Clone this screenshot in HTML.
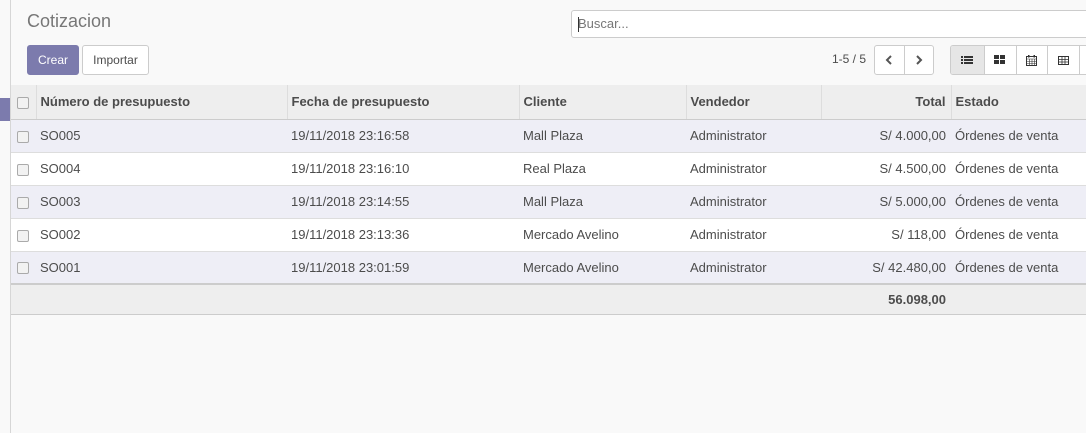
<!DOCTYPE html>
<html><head><style>
*{box-sizing:border-box;margin:0;padding:0}
body{width:1086px;height:433px;overflow:hidden;background:#f9f9f9;font-family:"Liberation Sans",sans-serif;font-size:13px;color:#4c4c4c;position:relative}
.lb{position:absolute;left:10px;top:0;width:1px;height:433px;background:#d6d6d6}
.ind{position:absolute;left:0;top:98px;width:10px;height:23px;background:#7c7bad}
h1{position:absolute;left:27px;top:11px;font-size:18px;font-weight:normal;color:#777}
.btn{position:absolute;top:45px;height:30px;border-radius:3px;font-size:12px;line-height:28px;text-align:center}
.crear{left:27px;width:52px;background:#7c7bad;color:#fff;border:1px solid #7c7bad}
.imp{left:82px;width:67px;background:#fff;color:#4c4c4c;border:1px solid #ccc}
.search{position:absolute;left:571px;top:10px;width:530px;height:28px;border:1px solid #ccc;border-radius:3px;background:#fff;padding-left:6px;line-height:26px;color:#777;font-size:13px}
.search:before{content:"";position:absolute;left:6px;top:6px;width:1px;height:15px;background:#333}
.pg{position:absolute;left:832px;top:52px;font-size:12px;color:#4c4c4c}
.grp{position:absolute;top:45px;height:30px;display:flex;border:1px solid #ccc;border-radius:3px;background:#fff;overflow:hidden}
.grp div{height:28px;border-left:1px solid #ccc;display:flex;align-items:center;justify-content:center;font-size:13px;color:#555}
.grp div:first-child{border-left:none}
table{position:absolute;left:11px;top:85px;width:1075px;border-collapse:collapse;table-layout:fixed}
th{height:34px;background:#eee;text-align:left;font-weight:bold;color:#4c4c4c;padding-left:4px;border-left:1px solid #ddd;border-bottom:1px solid #ccc}
td{height:33px;padding-left:4px;border-top:1px solid #ddd}
tr.o td{background:#eeeef6}
tr.e td{background:#fff}
th:first-child,td:first-child{border-left:none;padding-left:6px}
.cb{display:inline-block;width:12px;height:12px;border:1px solid #aaa;border-radius:2px;background:#f2f2f2;vertical-align:middle}
.r{text-align:right;padding-right:5px}
tr.f td{height:30px;background:#eee;border-top:2px solid #ccc;border-bottom:1px solid #ccc;font-weight:bold}
</style></head><body>
<div class="lb"></div><div class="ind"></div>
<h1>Cotizacion</h1>
<div class="btn crear">Crear</div><div class="btn imp">Importar</div>
<div class="search">Buscar...</div>
<div class="pg">1-5 / 5</div>
<div class="grp" style="left:874px;width:60px"><div style="width:29px"><svg width="8" height="10"><path d="M6 1L2 5l4 4" fill="none" stroke="#555" stroke-width="2"/></svg></div><div style="width:30px"><svg width="8" height="10"><path d="M2 1l4 4-4 4" fill="none" stroke="#555" stroke-width="2"/></svg></div></div>
<div class="grp" style="left:950px;width:140px">
<div style="width:33px;background:#e6e6e6"><svg width="12" height="10"><g fill="#333"><rect x="0" y="1" width="2" height="2"/><rect x="3" y="1" width="9" height="2"/><rect x="0" y="4" width="2" height="2"/><rect x="3" y="4" width="9" height="2"/><rect x="0" y="7" width="2" height="2"/><rect x="3" y="7" width="9" height="2"/></g></svg></div>
<div style="width:32px"><svg width="12" height="10"><g fill="#333"><rect x="0" y="0" width="5" height="4"/><rect x="6" y="0" width="5" height="4"/><rect x="0" y="5" width="5" height="4"/><rect x="6" y="5" width="5" height="4"/></g></svg></div>
<div style="width:32px"><svg width="11" height="11"><rect x="0.5" y="1.5" width="10" height="9" fill="none" stroke="#333"/><path d="M1 4h9M1 6.5h9M1 8.5h9M3.5 4v6M6 4v6M8.5 4v6" stroke="#333" stroke-width=".6"/><rect x="2" y="0" width="1.5" height="2.5" fill="#333"/><rect x="7.5" y="0" width="1.5" height="2.5" fill="#333"/></svg></div>
<div style="width:32px"><svg width="11" height="9"><rect x="0.5" y="0.5" width="10" height="8" fill="none" stroke="#333"/><path d="M0 3.5h11M0 6h11M4 0v9M7 0v9" stroke="#333" stroke-width=".8"/></svg></div>
<div style="width:10px"></div>
</div>
<table>
<colgroup><col style="width:25px"><col style="width:251px"><col style="width:232px"><col style="width:167px"><col style="width:135px"><col style="width:130px"><col></colgroup>
<tr><th><span class="cb"></span></th><th>Número de presupuesto</th><th>Fecha de presupuesto</th><th>Cliente</th><th>Vendedor</th><th class="r">Total</th><th>Estado</th></tr>
<tr class="o"><td><span class="cb"></span></td><td>SO005</td><td>19/11/2018 23:16:58</td><td>Mall Plaza</td><td>Administrator</td><td class="r">S/ 4.000,00</td><td>Órdenes de venta</td></tr>
<tr class="e"><td><span class="cb"></span></td><td>SO004</td><td>19/11/2018 23:16:10</td><td>Real Plaza</td><td>Administrator</td><td class="r">S/ 4.500,00</td><td>Órdenes de venta</td></tr>
<tr class="o"><td><span class="cb"></span></td><td>SO003</td><td>19/11/2018 23:14:55</td><td>Mall Plaza</td><td>Administrator</td><td class="r">S/ 5.000,00</td><td>Órdenes de venta</td></tr>
<tr class="e"><td><span class="cb"></span></td><td>SO002</td><td>19/11/2018 23:13:36</td><td>Mercado Avelino</td><td>Administrator</td><td class="r">S/ 118,00</td><td>Órdenes de venta</td></tr>
<tr class="o"><td><span class="cb"></span></td><td>SO001</td><td>19/11/2018 23:01:59</td><td>Mercado Avelino</td><td>Administrator</td><td class="r">S/ 42.480,00</td><td>Órdenes de venta</td></tr>
<tr class="f"><td></td><td></td><td></td><td></td><td></td><td class="r">56.098,00</td><td></td></tr>
</table>
</body></html>
